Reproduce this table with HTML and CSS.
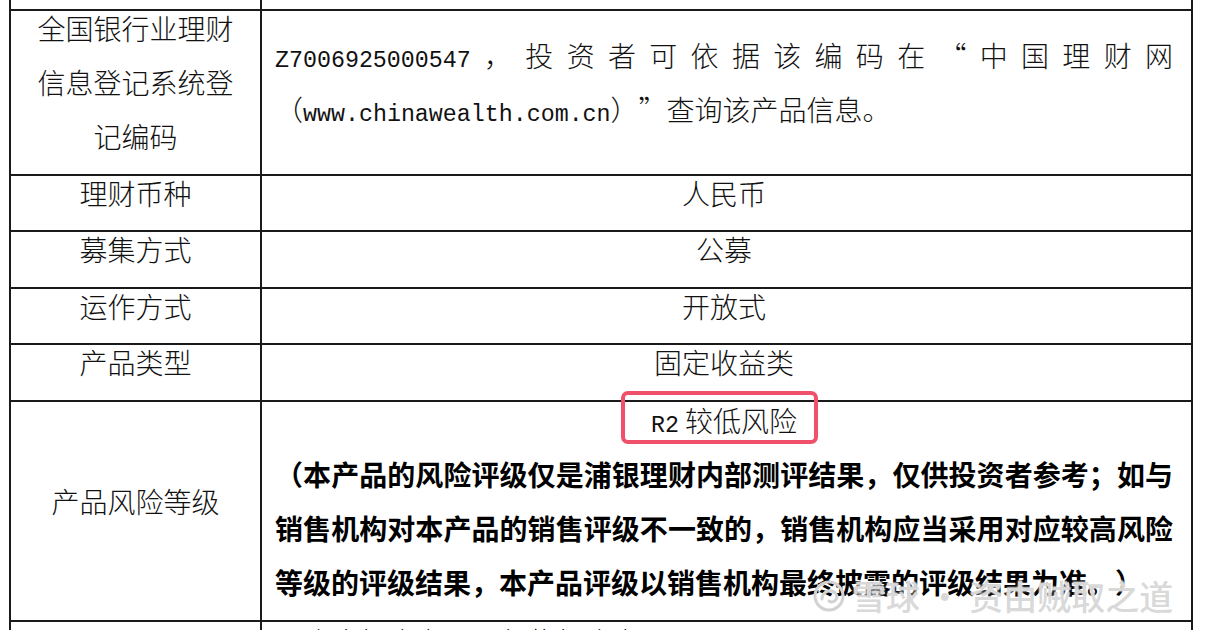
FILE: index.html
```html
<!DOCTYPE html>
<html lang="zh-CN">
<head>
  <meta charset="UTF-8" />
  <title>产品要素</title>
  <link rel="stylesheet" href="styles.css">
</head>
<body>
  <div class="sheet">
    <div class="cell label"></div>
    <div class="cell value"></div>

    <div class="cell label"><div class="txt">全国银行业理财信息登记系统登记编码</div></div>
    <div class="cell value"><div class="txt just"><span class="lat">Z7006925000547</span>，投资者可依据该编码在“中国理财网（<span class="lat">www.chinawealth.com.cn</span>）”查询该产品信息。</div></div>

    <div class="cell label"><div class="txt">理财币种</div></div>
    <div class="cell value"><div class="txt mid">人民币</div></div>

    <div class="cell label"><div class="txt">募集方式</div></div>
    <div class="cell value"><div class="txt mid">公募</div></div>

    <div class="cell label"><div class="txt">运作方式</div></div>
    <div class="cell value"><div class="txt mid">开放式</div></div>

    <div class="cell label"><div class="txt">产品类型</div></div>
    <div class="cell value"><div class="txt mid">固定收益类</div></div>

    <div class="cell label"><div class="txt">产品风险等级</div></div>
    <div class="cell value">
      <div class="txt">
        <div class="mid"><span class="flag"><span class="lat">R2</span> 较低风险</span></div>
        <div class="just bold">（本产品的风险评级仅是浦银理财内部测评结果，仅供投资者参考；如与销售机构对本产品的销售评级不一致的，销售机构应当采用对应较高风险等级的评级结果，本产品评级以销售机构最终披露的评级结果为准。）</div>
      </div>
    </div>

    <div class="cell label last"></div>
    <div class="cell value last"><div class="txt"><span class="box"></span>个人投资者、<span class="box"></span>机构投资者</div></div>
  </div>

  <div class="mark">
    <svg width="34" height="34" viewBox="0 0 34 34">
      <circle cx="17" cy="17" r="14" fill="none" stroke="#d2d2d2" stroke-width="3"/>
      <path d="M10 20 C10 12 20 9 24 15 C27 20 21 25 17 22" fill="none" stroke="#d2d2d2" stroke-width="3" stroke-linecap="round"/>
    </svg>
    <span>雪球 · 资由贼取之道</span>
  </div>
</body>
</html>
```

FILE: styles.css
```css
body {
  margin: 0;
  background: #fff;
  overflow: hidden;
  height: 630px;
  position: relative;
}
.sheet {
  display: grid;
  grid-template-columns: 249px 929px;
  grid-template-rows: 9px 163px 54px 55px 54px 55px 218px 60px;
  gap: 2px;
  width: max-content;
  margin-left: 9px;
  padding: 0 2px;
  background: #1a1a1a;
}
.cell {
  background: #fff;
  display: flex;
  flex-direction: column;
  justify-content: center;
  font-family: "Noto Sans CJK SC", sans-serif;
  font-size: 28px;
  font-weight: 300;
  line-height: 54px;
  color: #111;
  min-width: 0;
  text-spacing-trim: space-all;
}
.cell .txt {
  margin-bottom: 21px;
}
.cell.last {
  justify-content: flex-start;
}
.cell.last .txt {
  margin: -8px 0 0;
}
.label {
  text-align: center;
  padding: 0 20px;
}
.value {
  padding: 0 18px 0 13px;
}
.just {
  text-align: justify;
}
.mid {
  text-align: center;
}
.bold {
  font-weight: 700;
  color: #000;
}
.lat {
  font-family: "Liberation Mono", monospace;
  font-size: 23.3px;
  line-height: 20px;
}
.flag {
  display: inline-block;
  position: relative;
}
.flag::after {
  content: "";
  position: absolute;
  left: -30px;
  right: -21px;
  top: -2px;
  bottom: 3px;
  border: 4px solid #f0506a;
  border-radius: 7px;
}
.box {
  display: inline-block;
  width: 20px;
  height: 20px;
  margin: 0 6px 0 3px;
  background: #ddd;
  vertical-align: -2px;
}
.mark {
  position: absolute;
  left: 812px;
  top: 576px;
  display: flex;
  align-items: center;
  gap: 6px;
  font-family: "Noto Sans CJK SC", sans-serif;
  font-size: 34px;
  line-height: 40px;
  font-weight: 500;
  color: rgba(200, 200, 200, 0.7);
  text-shadow: 0 0 2px #fff, 0 0 2px #fff;
}
```
